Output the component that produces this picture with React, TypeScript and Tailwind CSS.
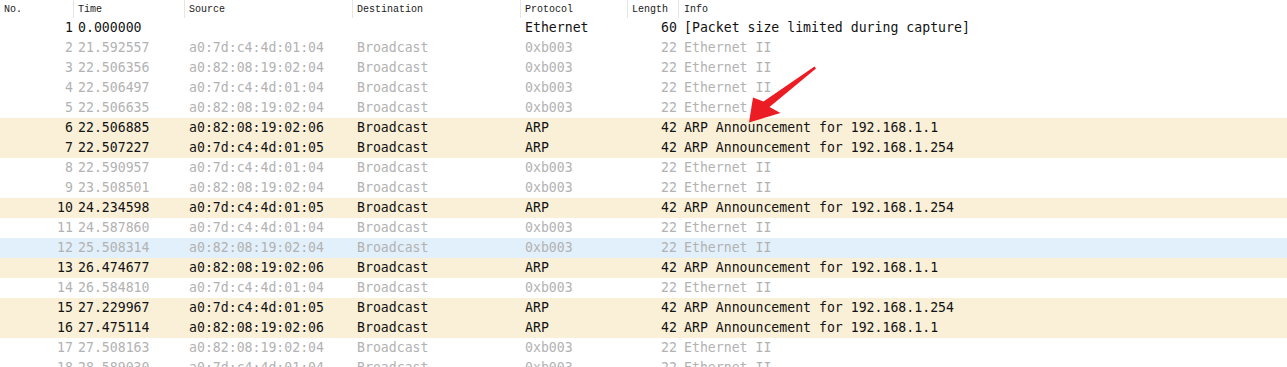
type Row = {
  no: number;
  time: string;
  src: string;
  dst: string;
  proto: string;
  len: string;
  info: string;
  kind: 'plain' | 'dim' | 'arp' | 'hover';
};

const ETH = (no: number, time: string, src: string, kind: Row['kind'] = 'dim', info = 'Ethernet II'): Row => ({
  no,
  time,
  src,
  dst: 'Broadcast',
  proto: '0xb003',
  len: '22',
  info,
  kind,
});

const ARP = (no: number, time: string, src: string, ip: string): Row => ({
  no,
  time,
  src,
  dst: 'Broadcast',
  proto: 'ARP',
  len: '42',
  info: `ARP Announcement for ${ip}`,
  kind: 'arp',
});

const rows: Row[] = [
  { no: 1, time: '0.000000', src: '', dst: '', proto: 'Ethernet', len: '60', info: '[Packet size limited during capture]', kind: 'plain' },
  ETH(2, '21.592557', 'a0:7d:c4:4d:01:04'),
  ETH(3, '22.506356', 'a0:82:08:19:02:04'),
  ETH(4, '22.506497', 'a0:7d:c4:4d:01:04'),
  ETH(5, '22.506635', 'a0:82:08:19:02:04', 'dim', 'Ethernet'),
  ARP(6, '22.506885', 'a0:82:08:19:02:06', '192.168.1.1'),
  ARP(7, '22.507227', 'a0:7d:c4:4d:01:05', '192.168.1.254'),
  ETH(8, '22.590957', 'a0:7d:c4:4d:01:04'),
  ETH(9, '23.508501', 'a0:82:08:19:02:04'),
  ARP(10, '24.234598', 'a0:7d:c4:4d:01:05', '192.168.1.254'),
  ETH(11, '24.587860', 'a0:7d:c4:4d:01:04'),
  ETH(12, '25.508314', 'a0:82:08:19:02:04', 'hover'),
  ARP(13, '26.474677', 'a0:82:08:19:02:06', '192.168.1.1'),
  ETH(14, '26.584810', 'a0:7d:c4:4d:01:04'),
  ARP(15, '27.229967', 'a0:7d:c4:4d:01:05', '192.168.1.254'),
  ARP(16, '27.475114', 'a0:82:08:19:02:06', '192.168.1.1'),
  ETH(17, '27.508163', 'a0:82:08:19:02:04'),
  ETH(18, '28.589030', 'a0:7d:c4:4d:01:04'),
];

const rowClass: Record<Row['kind'], string> = {
  plain: 'bg-white text-[#121212]',
  dim: 'bg-white text-[#b2b2b2]',
  arp: 'bg-[#faf0d7] text-[#121212]',
  hover: 'bg-[#e2f0fb] text-[#b2b2b2]',
};

function HeaderCell({ label, className }: { label: string; className: string }) {
  return (
    <div className={`flex h-full items-center border-r border-[#e5e5e5] pl-[4px] ${className}`}>
      {label}
    </div>
  );
}

function PacketRow({ row }: { row: Row }) {
  return (
    <div className={`flex h-[20px] items-center whitespace-pre ${rowClass[row.kind]}`}>
      <div className="w-[74px] shrink-0 pr-[1px] text-right">{row.no}</div>
      <div className="w-[111px] shrink-0 pl-[4px]">{row.time}</div>
      <div className="w-[168px] shrink-0 pl-[4px]">{row.src}</div>
      <div className="w-[168px] shrink-0 pl-[4px]">{row.dst}</div>
      <div className="w-[107px] shrink-0 pl-[4px]">{row.proto}</div>
      <div className="w-[51px] shrink-0 pr-[2px] text-right">{row.len}</div>
      <div className="flex-1 pl-[5px]">{row.info}</div>
    </div>
  );
}

function Arrow() {
  return (
    <svg className="pointer-events-none absolute left-0 top-0" width="1287" height="367">
      <polygon
        fill="#ec1c24"
        points="814.5,66.5 816,68.5 769.5,107 780.5,113 749,122.5 753,97.5 763.5,101.5"
      />
    </svg>
  );
}

export default function App() {
  return (
    <div className="relative h-[367px] w-[1287px] overflow-hidden bg-white">
      <div className="flex h-[18px] items-center font-['Liberation_Mono',monospace] text-[10px] text-[#1a1a1a]">
        <HeaderCell label="No." className="w-[74px]" />
        <HeaderCell label="Time" className="w-[111px]" />
        <HeaderCell label="Source" className="w-[168px]" />
        <HeaderCell label="Destination" className="w-[168px]" />
        <HeaderCell label="Protocol" className="w-[107px]" />
        <HeaderCell label="Length" className="w-[51px]" />
        <div className="flex h-full flex-1 items-center pl-[5px]">Info</div>
      </div>
      <div className="font-['DejaVu_Sans_Mono',monospace] text-[13.2px] leading-[20px]">
        {rows.map((r) => (
          <PacketRow key={r.no} row={r} />
        ))}
      </div>
      <Arrow />
    </div>
  );
}
